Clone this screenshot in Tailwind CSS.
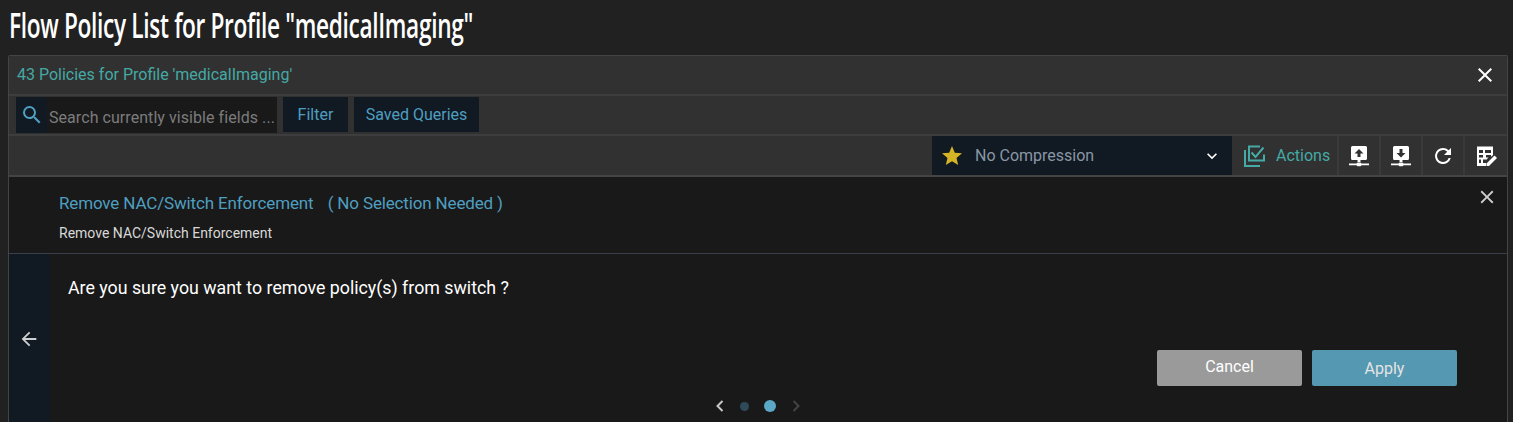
<!DOCTYPE html>
<html lang="en">
<head>
    <meta charset="UTF-8">
    <title>Flow Policy List</title>
    <script src="https://cdn.jsdelivr.net/npm/@tailwindcss/browser@4"></script>
</head>
<body class="bg-[#212121] h-[422px] overflow-hidden font-['Roboto',sans-serif]">
    <div class="h-[55px] pl-[9px] pt-[5px]">
        <h1 class="inline-block origin-left scale-x-[0.647] whitespace-nowrap text-[35px] leading-[40px] font-semibold text-white font-['Open_Sans',sans-serif] tracking-[-0.5px]">Flow Policy List for Profile "medicalImaging"</h1>
    </div>

    <div class="ml-[8px] mr-[5px] h-[367px] border-l border-r border-t border-[#444] rounded-t-[2px] bg-[#191919] overflow-hidden">
        <!-- title bar -->
        <div class="h-[40px] bg-[#313131] border-b-2 border-[#3d3d3d] flex items-center justify-between pl-[8px] pr-[10px]">
            <span class="text-[#45a9a5] text-[16px]">43 Policies for Profile 'medicalImaging'</span>
            <svg class="w-[24px] h-[24px] text-white" viewBox="0 0 24 24" fill="currentColor"><path d="M19 6.41 17.59 5 12 10.59 6.41 5 5 6.41 10.59 12 5 17.59 6.41 19 12 13.41 17.59 19 19 17.59 13.41 12z"/></svg>
        </div>

        <!-- search row -->
        <div class="h-[40px] bg-[#313131] border-b-2 border-[#3d3d3d] flex items-start pl-[7px] pt-[1px]">
            <div class="w-[261px] h-[36px] flex bg-[#191919] overflow-hidden">
                <div class="w-[31px] shrink-0 bg-[#111923] flex items-center justify-center">
                    <svg class="w-[24px] h-[24px] text-[#4f9fc0]" viewBox="0 0 24 24" fill="currentColor"><path d="M15.5 14h-.79l-.28-.27A6.47 6.47 0 0 0 16 9.5 6.5 6.5 0 1 0 9.5 16c1.61 0 3.09-.59 4.23-1.57l.27.28v.79l5 4.99L20.49 19l-4.99-5zm-6 0C7.01 14 5 11.99 5 9.5S7.01 5 9.5 5 14 7.01 14 9.5 11.99 14 9.5 14z"/></svg>
                </div>
                <span class="pl-[2px] pt-[3px] text-[#7c7c7c] text-[16px] leading-[36px] tracking-[0.06px] whitespace-nowrap">Search currently visible fields ...</span>
            </div>
            <button class="ml-[6px] w-[65px] h-[35px] pt-[1px] bg-[#111923] text-[#4f9fc0] text-[16px]">Filter</button>
            <button class="ml-[6px] w-[125px] h-[35px] pt-[1px] bg-[#111923] text-[#4f9fc0] text-[16px]">Saved Queries</button>
        </div>

        <!-- toolbar -->
        <div class="h-[41px] bg-[#313131] border-b-2 border-[#444] flex justify-end">
            <div class="w-[300px] h-[39px] bg-[#111923] flex items-center pl-[8px] pr-[10px]">
                <svg class="w-[24px] h-[24px] text-[#d4b425]" viewBox="0 0 24 24" fill="currentColor"><path d="M12 17.27 18.18 21l-1.64-7.03L22 9.24l-7.19-.61L12 2 9.19 8.63 2 9.24l5.46 4.73L5.82 21z"/></svg>
                <span class="ml-[11px] pt-[1px] text-[#8a97a5] text-[16px] flex-1">No Compression</span>
                <svg class="w-[20px] h-[20px] text-white" viewBox="0 0 24 24" fill="currentColor"><path d="M7.41 8.59 12 13.17l4.59-4.58L18 10l-6 6-6-6z"/></svg>
            </div>
            <div class="w-[105px] flex items-center pl-[12px]">
                <svg class="w-[21px] h-[23px] text-[#45a9a5]" viewBox="0 0 21 23" fill="none" stroke="currentColor" stroke-width="2"><path d="M1 6v16h15"/><path d="M16 2.500H5v14h15v-6"/><path d="M7.500 8.500l4 4.500 8-9.500"/></svg>
                <span class="ml-[11px] text-[#45a9a5] text-[16px]">Actions</span>
            </div>
            <div class="flex">
                <button class="w-[42px] border-l-2 border-[#3a3a3a] flex items-center justify-center">
                    <svg class="w-[24px] h-[24px] text-white" viewBox="0 0 24 24" fill="currentColor"><path d="M5.500 2h13A1.500 1.500 0 0 1 20 3.500v11a1.500 1.500 0 0 1-1.500 1.500h-5v2h-3v-2h-5A1.500 1.500 0 0 1 4 14.500v-11A1.500 1.500 0 0 1 5.500 2z"/><path fill="#313131" d="M12 5l4.500 4.500h-3V13h-3V9.500h-3z"/><path d="M2 19.500h7.500l1-1h3l1 1H22v1.800h-7.500l-1 1h-3l-1-1H2z"/></svg>
                </button>
                <button class="w-[42px] border-l-2 border-[#3a3a3a] flex items-center justify-center">
                    <svg class="w-[24px] h-[24px] text-white" viewBox="0 0 24 24" fill="currentColor"><path d="M5.500 2h13A1.500 1.500 0 0 1 20 3.500v11a1.500 1.500 0 0 1-1.500 1.500h-5v2h-3v-2h-5A1.500 1.500 0 0 1 4 14.500v-11A1.500 1.500 0 0 1 5.500 2z"/><path fill="#313131" d="M12 13.500l-4.500-4.500h3V5h3v4h3z"/><path d="M2 19.500h7.500l1-1h3l1 1H22v1.800h-7.500l-1 1h-3l-1-1H2z"/></svg>
                </button>
                <button class="w-[42px] border-l-2 border-[#3a3a3a] flex items-center justify-center">
                    <svg class="w-[24px] h-[24px] text-white" viewBox="0 0 24 24" fill="currentColor"><path d="M17.650 6.350A7.960 7.960 0 0 0 12 4a8 8 0 1 0 7.730 10h-2.080A6 6 0 1 1 12 6c1.660 0 3.140.69 4.220 1.780L13 11h7V4l-2.350 2.350z"/></svg>
                </button>
                <button class="w-[44px] border-l-2 border-[#3a3a3a] flex items-center justify-center">
                    <svg class="w-[24px] h-[24px] text-white" viewBox="0 0 24 24" fill="currentColor"><path d="M3 2.500h16V11l-1.500 1.500H17V11h-5v2.500h2.500L12 16v-.5H9V19h3v3H3zm2 3.500v3h4V6zm6 0v3h6V6zm-6 5v2.500h4V11zm0 4.500V19h2v-3.500z"/><path d="M20.500 11.500l2.500 2.500-8 8h-2.500v-2.500z"/></svg>
                </button>
            </div>
        </div>

        <!-- step header -->
        <div class="relative h-[77px] border-b border-[#39404a] pl-[50px] pt-[15px]">
            <p class="text-[#4f9fc0] text-[17px] leading-[22px] tracking-[-0.15px] whitespace-pre">Remove NAC/Switch Enforcement   <span class="ml-[2px]">( No Selection Needed )</span></p>
            <p class="mt-[9px] text-[#d8d8d8] text-[14px] leading-[20px]">Remove NAC/Switch Enforcement</p>
            <svg class="absolute right-[9px] top-[9px] w-[22px] h-[22px] text-[#cfcfcf]" viewBox="0 0 24 24" fill="currentColor"><path d="M19 6.410 17.590 5 12 10.590 6.410 5 5 6.410 10.590 12 5 17.590 6.410 19 12 13.410 17.590 19 19 17.590 13.410 12z"/></svg>
        </div>

        <!-- step body -->
        <div class="flex h-[169px]">
            <div class="w-[41px] bg-[#111923] flex items-center justify-center pr-[2px]">
                <svg class="w-[22px] h-[22px] text-[#cfcfcf]" viewBox="0 0 24 24" fill="currentColor"><path d="M20 11H7.830l5.590-5.590L12 4l-8 8 8 8 1.410-1.410L7.830 13H20v-2z"/></svg>
            </div>
            <div class="relative flex-1">
                <p class="pl-[18px] pt-[23px] text-white text-[17.800px] leading-[22px]">Are you sure you want to remove policy(s) from switch ?</p>
                <div class="absolute right-[50px] top-[96px] flex gap-[10px]">
                    <button class="w-[145px] h-[36px] rounded-[2px] bg-[#9a9a9a] text-white text-[16px] pb-[2px]">Cancel</button>
                    <button class="w-[145px] h-[36px] rounded-[2px] bg-[#5598b2] text-[#e4e4e4] text-[16px] pt-[2px]">Apply</button>
                </div>
                <div class="absolute left-[662px] top-[144px] flex items-center">
                    <svg class="w-[16px] h-[16px] text-[#c8c8c8]" viewBox="0 0 16 16" fill="none" stroke="currentColor" stroke-width="2"><path d="M10.500 3 5.500 8l5 5"/></svg>
                    <span class="ml-[12px] w-[9px] h-[9px] rounded-full bg-[#2f4a5a]"></span>
                    <span class="ml-[15px] w-[12px] h-[12px] rounded-full bg-[#5ba7c8]"></span>
                    <svg class="ml-[12px] w-[16px] h-[16px] text-[#444]" viewBox="0 0 16 16" fill="none" stroke="currentColor" stroke-width="2"><path d="M5.500 3l5 5-5 5"/></svg>
                </div>
            </div>
        </div>
    </div>
</body>
</html>
